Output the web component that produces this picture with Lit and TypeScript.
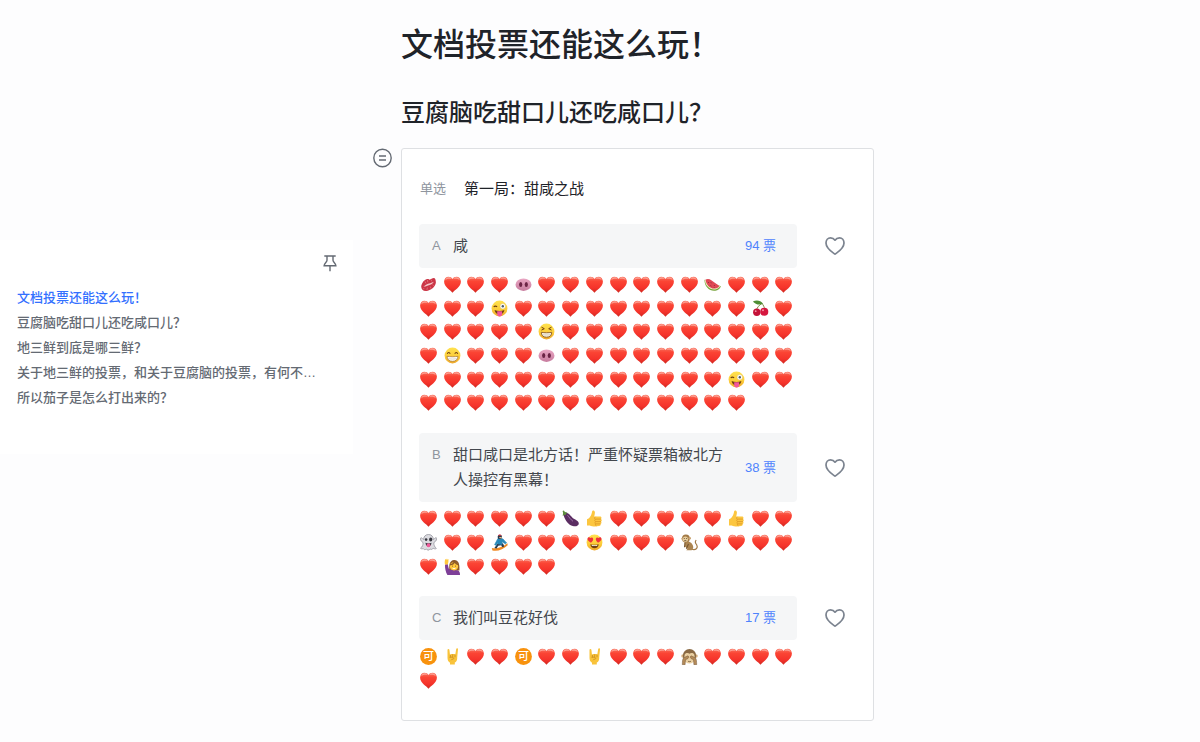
import { LitElement, html, svg, css } from "lit";
import type { SVGTemplateResult } from "lit";
import { customElement, state } from "lit/decorators.js";

interface Choice {
  key: string;
  text: string;
  votes: number;
  reactions: string;
}

const outline = [
  "文档投票还能这么玩！",
  "豆腐脑吃甜口儿还吃咸口儿？",
  "地三鲜到底是哪三鲜？",
  "关于地三鲜的投票，和关于豆腐脑的投票，有何不…",
  "所以茄子是怎么打出来的？",
];

/* One letter per reaction; h is the plain heart. */
const choices: Choice[] = [
  {
    key: "A",
    text: "咸",
    votes: 94,
    reactions:
      "khhhphhhhhhhwhhh" +
      "hhhzhhhhhhhhhhch" +
      "hhhhhlhhhhhhhhhh" +
      "hghhhphhhhhhhhhh" +
      "hhhhhhhhhhhhhzhh" +
      "hhhhhhhhhhhhhh",
  },
  {
    key: "B",
    text: "甜口咸口是北方话！严重怀疑票箱被北方人操控有黑幕！",
    votes: 38,
    reactions: "hhhhhhethhhhhthh" + "ohhshhhyhhhmhhhh" + "hrhhhh",
  },
  {
    key: "C",
    text: "我们叫豆花好伐",
    votes: 17,
    reactions: "KRhhKhhRhhhMhhhh" + "h",
  },
];

const face = svg`<circle cx="8.5" cy="8.5" r="7.9" fill="url(#face)"/>`;

const emoji: Record<string, [string, SVGTemplateResult]> = {
  h: ["红心", svg`
    <path d="M8.5 16.700C6.500 14.200.1 11 .1 5.600.1 2.700 2.100.7 4.500.7c1.800 0 3.200.8 4 2.200.8-1.400 2.200-2.200 4-2.200 2.400 0 4.400 2 4.400 4.900 0 5.400-6.400 8.600-8.400 11.100z" fill="url(#heart)"/>
    <path d="M1.300 4.100C1.700 2.300 3 1.300 4.600 1.300c1.400 0 2.500.6 3.200 1.800-1.700-.5-4.600-.5-6.500 1zM9.200 3.100c.7-1.200 1.800-1.800 3.200-1.800 1.600 0 2.900 1 3.300 2.800-1.900-1.500-4.800-1.500-6.500-1z" fill="#ffb4a8" opacity=".75"/>`],
  k: ["唇印", svg`
    <path d="M1.200 10.300C1.800 6.800 4.800 2.900 7.600 3.100c1.200 0 1.500.6 2.100.6 1-.2 3-1.900 4.500-1.600 1.400.4 1.600 2.800 1.700 4.500-.4 4.300-5.100 8.200-9.700 8.400-3.300.1-5-1.600-5-4.700z" fill="#cb3546"/>
    <path d="M3.300 10.500c2-.9 3.500-2.600 5.500-3 1.900-.2 3.300-1.200 5-1.800-.8 1.600-2.100 2.600-4.300 3.200-2.300.4-3.800 2-6.200 1.600z" fill="#f3c6c8"/>
    <path d="M5 5.500l1 1.900M7.500 4l.3 2.300M11.300 3.800l.3 1.500M4.200 12l-1 1.200M7.400 11.500l-.5 2.400M10.300 10.500l.7 2M12.500 8.700l1.300 1.200" stroke="#ee8d91" stroke-width=".6"/>`],
  p: ["猪鼻子", svg`
    <ellipse cx="8.500" cy="8.700" rx="8" ry="6.200" fill="url(#snout)"/>
    <ellipse cx="5.700" cy="8.500" rx="1.600" ry="2.600" fill="#6b2445"/><ellipse cx="11.300" cy="8.500" rx="1.600" ry="2.600" fill="#6b2445"/>`],
  w: ["西瓜", svg`
    <path d="M.5 3.800C.2 10.500 5.500 15.500 11.300 14.700c2.700-.4 4.900-1.900 5.500-4.400z" fill="#77a33b"/>
    <path d="M.8 3.600C1 9.700 6 14.300 11.200 13.500c2.200-.3 4.200-1.500 5-3.400z" fill="#eef0c4"/>
    <path d="M1.500 3.500C2 9 6.500 13.200 11 12.500c2-.3 3.500-1.200 4.400-2.600L7.300 4.200C5.500 2.800 3.500 2.600 1.500 3.500z" fill="#df4854"/>
    <path d="M4.200 6l.5.7M7 6.500l.5.700M6.700 9.500l.5.7M10 9l.5.7M10 11.300l.5.500" stroke="#5b2027" stroke-width=".8"/>`],
  z: ["单眼吐舌", svg`${face}
    <path d="M2.700 6.900c.9-.9 2.500-.9 3.400 0" fill="none" stroke="#70400f" stroke-width="1.200"/>
    <circle cx="11.800" cy="6.300" r="2.700" fill="#fff" stroke="#cda33a" stroke-width=".3"/><circle cx="11.800" cy="6.300" r="1.200" fill="#4b5b6b"/>
    <path d="M3.600 10c3 1.200 6.800 1.200 9.800 0-.3 2.800-2.300 4.300-4.900 4.300S3.900 12.800 3.600 10z" fill="#70400f"/>
    <path d="M6.200 11.200h4.900v3.100c0 3-4.900 3-4.900 0z" fill="#f2579b"/>`],
  c: ["樱桃", svg`
    <path d="M9.800 3.300C7.500 5 5 7.500 4.500 10M9.800 3.300c1.600 1.700 2.700 4 2.700 6" fill="none" stroke="#6d7b2b" stroke-width=".9"/>
    <path d="M.9 1.400C4.500-.4 8.700.3 11 3.700 7.500 5.500 3.300 4.500.9 1.400z" fill="#4f8e35"/>
    <circle cx="4.800" cy="12.300" r="3.700" fill="#c41238"/><circle cx="12.300" cy="11.800" r="4" fill="#d5163e"/>
    <circle cx="3.700" cy="11.200" r=".9" fill="#f291a3"/><circle cx="11" cy="10.300" r="1" fill="#f291a3"/>`],
  l: ["眯眼笑", svg`${face}
    <path d="M3.500 4.200l2.800 1.500-2.800 1.400M13.500 4.200l-2.800 1.500 2.800 1.400" fill="none" stroke="#70400f" stroke-width="1"/>
    <path d="M3.300 9.300c3.400.6 7 .6 10.400 0 .1 3.300-1.900 4.900-5.200 4.900s-5.300-1.600-5.200-4.900z" fill="#f7f3e8" stroke="#8a5a1e" stroke-width=".9"/>
    <path d="M4 11.600c3 .5 6 .5 9 0" fill="none" stroke="#b9a98a" stroke-width=".5"/>`],
  g: ["露齿笑", svg`${face}
    <path d="M3.300 6.800c.5-1.700 2.300-1.700 2.900 0M10.800 6.800c.6-1.700 2.400-1.700 2.900 0" fill="none" stroke="#70400f" stroke-width="1.100"/>
    <path d="M3 9.300c3.600.6 7.400.6 11 0-.1 3.300-2.200 5-5.500 5S3.100 12.600 3 9.300z" fill="#fff" stroke="#a0712c" stroke-width=".7"/>
    <path d="M3.500 11.700c3.200.5 6.800.5 10 0" fill="none" stroke="#b9a98a" stroke-width=".5"/>`],
  e: ["茄子", svg`
    <path d="M3.300 2.600C7 3 8.500 5.800 11 8.200c2.200 1.500 5.700 2.500 5.800 5.200 0 2.300-3 3.400-6 2.600C6.500 15 3.200 10.300 1.600 5.200z" fill="#5b2d62"/>
    <path d="M5.500 5.300c1.700 1.800 3 4.200 5.500 6" fill="none" stroke="#a67bb0" stroke-width=".9"/>
    <path d="M.6.900l1.300-.5 1 1.500 2.600.9-1.500.9-.4 1.600-1.200-.6-1.700 1.300.4-3z" fill="#5c8c3c"/>`],
  t: ["点赞", svg`
    <path d="M1 9.300C4 8.500 5.600 4.800 6.100 1.500 6.300-.1 8.700.2 8.900 2.200c.1 1.700-.5 3.200-.7 4.400h5.800c1.600 0 2 1.800.9 2.500 1.200.6 1.100 2.100 0 2.500.9.600.7 2-.4 2.300.5.900 0 2-1.400 2.200-3.600.7-7.200.5-9.300-.7H1z" fill="#fcc63f"/>
    <path d="M9.500 9.100h5.400M9.500 11.600h5.400M9.700 13.900h4.600M9.500 6.800c-1.200 1-1.200 2-.1 2.400-.9 1-.8 1.900.1 2.400-.7.900-.6 1.700.2 2.300-.5.800-.2 1.500.6 2" fill="none" stroke="#dc9623" stroke-width=".8"/>`],
  o: ["幽灵", svg`
    <path d="M8.500.5c3 0 4.700 2 5 5.100 1.100-.6 1.400-2 2.600-1.900 1.300.3.800 3-2.300 5 0 2.500.7 4 2.500 5.800-1.100.8-2.300.1-3.100-.3-.8 1.400-2.200 1.500-3.200.7-1 1.700-2.800 1.600-3.500.1-1.500 1-2.700.7-3.300-.5-.9.500-2 .4-2.700-.3 2-1.300 2.700-3.500 2.600-5.500C.2 6.700-.2 4.100 1 3.800c1.200-.2 1.400 1.200 2.500 1.800C3.700 2.500 5.500.5 8.500.5z" fill="#dcdce1" stroke="#94949d" stroke-width=".8"/>
    <circle cx="6.100" cy="5.600" r="1.300" fill="#37373f"/><ellipse cx="10.700" cy="5.500" rx="1.600" ry="1.900" fill="#37373f"/>
    <path d="M5.500 8.800c2 .7 4 .7 6 0-.1 2-1.300 3.900-3 3.900s-2.900-1.900-3-3.900z" fill="#37373f"/><ellipse cx="8.500" cy="11.300" rx="1.900" ry="2" fill="#ef5c9b"/>`],
  s: ["滑雪板", svg`
    <path d="M.8 14c4.800 1.100 10.400-.7 15.600-4.700l.3 2C12.300 15.800 6 17.700 1.400 16.400z" fill="#f08a24"/>
    <path d="M7.500 8.300l4.600 1.200 1.200 3-2 .7-1.100-2-3 .5-1.600 2.800-2.200-.5z" fill="#283c52"/>
    <path d="M7 4.400l4.800.5 3.700 4-1.200.9-3-2.300-.5 2.900-4-.7-.1-2-1.500 3.500-1.500-.5z" fill="#2787b8" stroke="#2787b8" stroke-width=".8"/>
    <circle cx="8.800" cy="2.900" r="2.200" fill="#26384d"/><path d="M7 1.800C7.400.1 10 0 10.700 1.800z" fill="#d73c43"/><path d="M8.200 3h2.500v1.300H8.500z" fill="#f1bd80"/>`],
  y: ["花痴", svg`${face}
    <path d="M5 8.800C3.600 7.800 1.100 6.300 1.500 4.400c.4-1.500 2.300-1.500 2.900-.3 1-1 2.800-.5 2.800 1.100 0 1.500-1.400 2.600-2.200 3.600zM12 8.800c1.400-1 3.900-2.500 3.500-4.400-.4-1.500-2.300-1.500-2.900-.3-1-1-2.800-.5-2.800 1.100 0 1.500 1.400 2.600 2.200 3.600z" fill="#ef303b"/>
    <path d="M4.300 10.300c2.800.7 5.600.7 8.400 0-.3 2.700-1.900 4-4.200 4s-3.900-1.300-4.200-4z" fill="#70400f"/><path d="M5.600 11c2 .4 3.800.4 5.800 0l-.4 1.100H6z" fill="#fff"/>`],
  m: ["猴子", svg`
    <path d="M10.200 15c4.800 1.700 7-1 5.500-4.100-1.100-2-2.500-2.400-.5-4.900" fill="none" stroke="#a17a47" stroke-width="1.200"/>
    <path d="M3.500 7c4.500-.8 9.500 2.500 8.700 7.300l-1.500 1.900H5.300l1.200-1.500L4 12.500z" fill="#ab8450"/>
    <path d="M4 8.500l-.5 4.700M7.500 10l-2.200 4.700" stroke="#765630" stroke-width="1.100"/>
    <circle cx="4.900" cy="4.500" r="3.900" fill="#a27a46"/><circle cx="8.700" cy="4.200" r="1.300" fill="#caa473"/><circle cx="1.200" cy="4.700" r="1" fill="#caa473"/>
    <ellipse cx="4.400" cy="5.300" rx="2.600" ry="2.700" fill="#e8ce9d"/><path d="M3.300 4v.9M5.600 4v.9M3.300 6.700h2" stroke="#4e3822" stroke-width=".8"/>`],
  r: ["举手", svg`
    <path d="M1 6.500L3.700 6l1 4.500 3.800 1.300 5.300.4c1.800.8 2.300 2.700 2.200 4.700H3.400C1.700 14.200.8 10 1 6.500z" fill="#7e3f98"/>
    <path d="M1 6.500C.5 4.500.7 2.700 1.300.9l1 .8L3 .5l.5 1.200 1-.7-.1 3.100-.7 2.500z" fill="#ffc83d"/>
    <path d="M5.400 11.500c-.7-4.700.4-9.200 4.600-9.500 4.500-.2 5.800 4 5.400 10.500z" fill="#8b592a"/>
    <circle cx="10" cy="8.300" r="4.100" fill="#ffc83d"/><path d="M6 6.900c2.500-.3 4-1.500 4.700-3.100 1 1.700 2 2.400 3.500 2.800" fill="none" stroke="#8b592a" stroke-width="1.300"/>
    <path d="M8.500 7.700v.8M11.500 7.700v.8" stroke="#5a3613" stroke-width=".8"/><path d="M8.200 9.800c1.200.5 2.400.5 3.600 0-.3 1.800-3.200 1.800-3.600 0z" fill="#fff"/>`],
  K: ["可", svg`
    <circle cx="8.500" cy="8.500" r="8.400" fill="#f8920d"/>
    <text x="8.500" y="12.400" text-anchor="middle" font-size="11" font-weight="500" fill="#fff">可</text>`],
  R: ["摇滚手势", svg`
    <path d="M3.500 1.800c.1-1.200 1.700-1.200 1.900 0l.6 5.200.8-1h3.700l.8.4.9-5.300c.2-1.300 1.900-1 1.800.2l-.8 8.200c.2 2.600-.8 4.200-2.400 5.100v2H6v-1.900C4.200 13.800 3.500 12 3.500 9.800z" fill="#f9c33a"/>
    <path d="M6.400 6.800v2.600M8.700 6.300v3M11 6.600v2.700M5.500 9.300c2.300-.6 4.700.3 4.200 1.400-.5.800-2 .2-2.600 1.500" fill="none" stroke="#c68a20" stroke-width=".8"/>`],
  M: ["非礼勿视", svg`
    <circle cx="2" cy="8" r="1.800" fill="#d8b383"/><circle cx="15" cy="8" r="1.800" fill="#d8b383"/>
    <circle cx="8.500" cy="7.800" r="6.700" fill="#8a6a44"/>
    <path d="M3.800 6.200C5 4.500 7.500 4.600 8.500 5.800c1-1.200 3.500-1.300 4.700.4l1 5c-.7 2.600-3 4.200-5.700 4.200s-5-1.600-5.700-4.200z" fill="#ead0a2"/>
    <path d="M1.300 16.700c.2-3.400-.1-5.500 1.700-7.200l4-1.700.9 1.200-.9 1.500-2.500 1.200-.4 5zM15.700 16.700c-.2-3.400.1-5.500-1.700-7.200l-4-1.700-.9 1.200.9 1.500 2.500 1.200.4 5z" fill="#b48b58" stroke="#77593a" stroke-width=".5"/>
    <path d="M7 13.200c1 .6 2 .6 3 0" fill="none" stroke="#684c2e" stroke-width=".8"/>`],
};

@customElement("app-root")
export class AppRoot extends LitElement {
  @state() private picked = "";

  static styles = css`
    :host {
      display: block;
      min-height: 100vh;
      box-sizing: border-box;
      background: #fdfdfe;
      color: #1f2329;
      font-family: "Liberation Sans", "Noto Sans CJK SC", sans-serif;
    }
    * { box-sizing: border-box; }
    h1, h2, p, ul, ol { margin: 0; padding: 0; }
    ul, ol { list-style: none; }
    button {
      display: flex;
      align-items: center;
      justify-content: center;
      padding: 0;
      border: 0;
      background: none;
      color: #646a73;
      cursor: pointer;
    }
    svg { display: block; }
    .defs { position: absolute; width: 0; height: 0; }
    .page {
      display: grid;
      grid-template-columns: 353px minmax(0, 521px);
      align-items: start;
      padding-bottom: 20px;
    }
    .outline {
      margin-top: 240px;
      padding: 14px 14px 44px 17px;
      background: #fff;
    }
    .pin { width: 18px; height: 18px; margin: 0 0 13px auto; }
    .outline a {
      display: block;
      overflow: hidden;
      color: #646a73;
      font-size: 13px;
      font-weight: 500;
      line-height: 25px;
      text-decoration: none;
      text-overflow: ellipsis;
      white-space: nowrap;
    }
    .outline a.current { color: #3370ff; }
    .document { padding-top: 20px; }
    h1, h2 {
      padding-left: 48px;
      font-family: "Noto Sans CJK SC", sans-serif;
      font-weight: 500;
    }
    h1 { font-size: 32px; line-height: 44px; }
    h2 { margin-top: 30px; font-size: 24px; line-height: 34px; }
    .block {
      display: grid;
      grid-template-columns: 20px minmax(0, 1fr);
      gap: 8px;
      align-items: start;
      margin-top: 20px;
      padding-left: 20px;
    }
    .handle { width: 20px; height: 20px; }
    .card {
      padding: 28px 0 24px 17px;
      border: 1px solid #dee0e3;
      border-radius: 3px;
      background: #fff;
    }
    .question {
      display: flex;
      align-items: center;
      gap: 18px;
      margin-bottom: 23px;
      padding-left: 1px;
      line-height: 24px;
    }
    .kind { color: #8f959e; font-size: 13px; }
    .topic { font-size: 15px; }
    .choices { display: grid; gap: 15px; }
    .choice {
      display: grid;
      grid-template-columns: minmax(0, 1fr) 76px;
      align-items: center;
    }
    .answer {
      display: flex;
      padding: 9px 21px 10px 13px;
      border-radius: 4px;
      background: #f5f6f7;
      font-size: 15px;
      line-height: 25px;
    }
    .key { width: 21px; color: #8f959e; font-size: 13px; }
    .text { flex: 1; color: #43474d; }
    .votes {
      align-self: center;
      margin-left: 18px;
      color: #4e83fd;
      font-size: 13px;
      white-space: nowrap;
    }
    .like { justify-self: center; width: 24px; height: 24px; color: #7b838f; }
    .like[aria-pressed="true"] { color: #f54a45; }
    .reactions {
      display: grid;
      grid-template-columns: repeat(16, minmax(0, 1fr));
      margin-right: -2px;
      padding: 8px 0 0 1px;
    }
    .reactions li { aspect-ratio: 1; }
    .reactions text { font-family: "Noto Sans CJK SC", sans-serif; }
  `;

  private toggle(key: string) {
    this.picked = this.picked === key ? "" : key;
  }

  private reaction(code: string) {
    const [label, drawing] = emoji[code];
    return html`<li><svg width="17" height="17" viewBox="0 0 17 17" role="img" aria-label=${label}>${drawing}</svg></li>`;
  }

  private choice(c: Choice) {
    return html`
      <li class="choice">
        <div class="answer">
          <span class="key">${c.key}</span>
          <span class="text">${c.text}</span>
          <span class="votes">${c.votes} 票</span>
        </div>
        <button class="like" aria-label="投票给 ${c.key}" aria-pressed=${this.picked === c.key} @click=${() => this.toggle(c.key)}>
          <svg width="22" height="22" viewBox="0 0 22 22" fill="none" stroke="currentColor" stroke-width="1.700" stroke-linejoin="round">
            <path d="M11 19.200C9.300 17.800 2 13.800 2 8 2 5 3.900 2.900 6.500 2.900c1.900 0 3.400.7 4.500 2.300 1.100-1.600 2.600-2.300 4.500-2.300C18.100 2.900 20 5 20 8c0 5.800-7.300 9.800-9 11.200z"/>
          </svg>
        </button>
        <ul class="reactions">${[...c.reactions].map((r) => this.reaction(r))}</ul>
      </li>`;
  }

  render() {
    return html`
      <svg class="defs" aria-hidden="true">
        <defs>
          <linearGradient id="heart" x1="0" y1="0" x2="0" y2="1">
            <stop offset="0" stop-color="#f8715f"/><stop offset=".3" stop-color="#fb4434"/>
            <stop offset=".7" stop-color="#f5332b"/><stop offset="1" stop-color="#cf2a22"/>
          </linearGradient>
          <linearGradient id="face" x1="0" y1="0" x2="0" y2="1">
            <stop offset="0" stop-color="#ffe24e"/><stop offset=".6" stop-color="#fccb38"/><stop offset="1" stop-color="#eea72b"/>
          </linearGradient>
          <linearGradient id="snout" x1="0" y1="0" x2="0" y2="1">
            <stop offset="0" stop-color="#e9a6c3"/><stop offset="1" stop-color="#c77c9e"/>
          </linearGradient>
        </defs>
      </svg>
      <div class="page">
        <nav class="outline" aria-label="目录">
          <button class="pin" aria-label="固定目录">
            <svg width="18" height="18" viewBox="0 0 18 18" fill="none" stroke="currentColor" stroke-width="1.400">
              <path d="M3.300 2h11.400M6 2v4.300c0 1.800-2.700 2.600-2.900 5.400h11.800c-.2-2.800-2.900-3.600-2.900-5.400V2M9 11.700V17.300"/>
            </svg>
          </button>
          <ul>
            ${outline.map((t, i) => html`<li><a href="#s${i}" class=${i ? "" : "current"}>${t}</a></li>`)}
          </ul>
        </nav>
        <main class="document">
          <h1 id="s0">文档投票还能这么玩！</h1>
          <h2 id="s1">豆腐脑吃甜口儿还吃咸口儿？</h2>
          <div class="block">
            <button class="handle" aria-label="块菜单">
              <svg width="20" height="20" viewBox="0 0 20 20" fill="none" stroke="currentColor" stroke-width="1.400">
                <circle cx="9.500" cy="10" r="8.700"/><path d="M6 8h7M6 12h7"/>
              </svg>
            </button>
            <section class="card">
              <div class="question"><span class="kind">单选</span><span class="topic">第一局：甜咸之战</span></div>
              <ol class="choices">${choices.map((c) => this.choice(c))}</ol>
            </section>
          </div>
        </main>
      </div>`;
  }
}
